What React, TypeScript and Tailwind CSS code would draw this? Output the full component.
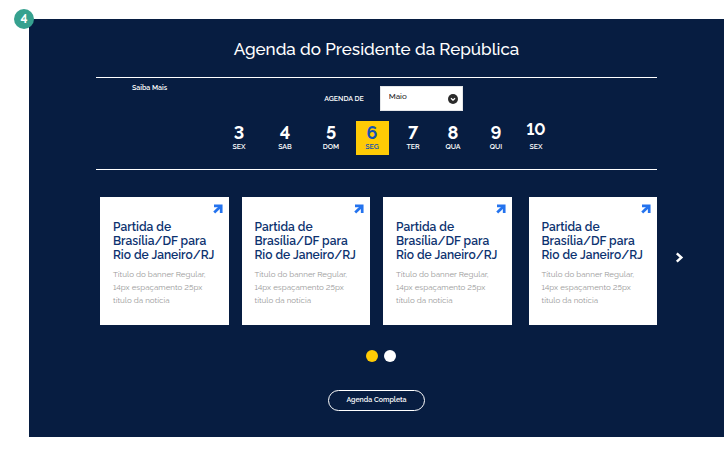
const days = [
  { number: "3", name: "SEX" },
  { number: "4", name: "SAB" },
  { number: "5", name: "DOM" },
  { number: "6", name: "SEG", active: true },
  { number: "7", name: "TER" },
  { number: "8", name: "QUA" },
  { number: "9", name: "QUI" },
  { number: "10", name: "SEX" },
];

const events = [1, 2, 3, 4].map((id) => ({
  id,
  title: ["Partida de", "Brasília/DF para", "Rio de Janeiro/RJ"],
  text: ["Título do banner Regular,", "14px espaçamento 25px", "título da notícia"],
}));

function ArrowIcon() {
  return (
    <svg className="h-[10px] w-[10px]" viewBox="0 0 10 10" fill="none" stroke="#2473ee" strokeWidth="2.7" aria-hidden="true">
      <path d="M1 1.8H8.2V9" />
      <path d="M7.8 2.2L1.2 8.5" />
    </svg>
  );
}

function MonthPicker() {
  return (
    <div className="flex items-center justify-center gap-4">
      <label htmlFor="month" className="text-[7px] leading-[8px] font-semibold">
        AGENDA DE
      </label>
      <div className="relative">
        <select
          id="month"
          defaultValue="Maio"
          className="block h-[25px] w-[83px] appearance-none border border-[#e4e6e8] bg-white pb-[5px] pl-2 text-[8px] font-medium text-[#222222]"
        >
          <option>Maio</option>
        </select>
        <svg className="pointer-events-none absolute top-2 right-[5px] h-[10px] w-[10px]" viewBox="0 0 10 10" aria-hidden="true">
          <circle cx="5" cy="5" r="5" fill="#2b2b2b" />
          <path d="M3 4.2L5 6.2L7 4.2" fill="none" stroke="white" strokeWidth="1.3" />
        </svg>
      </div>
    </div>
  );
}

function DayPicker() {
  return (
    <div className="mt-[10px] grid grid-cols-[46px_46px_41px_41px_40px_43px_40px_33px] justify-center pl-[22px]">
      {days.map((day) => (
        <button
          key={day.number}
          type="button"
          className={`flex h-[34px] w-[33px] flex-col items-center ${day.active ? "bg-[#ffcb05] text-[#1351b4]" : "text-white"}`}
        >
          <span className={`h-[21px] font-bold ${day.number === "10" ? "text-base leading-[17px]" : "text-lg leading-[23px]"}`}>
            {day.number}
          </span>
          <span className="text-[7px] leading-[9px] font-semibold">{day.name}</span>
        </button>
      ))}
    </div>
  );
}

function EventCard({ title, text }: { title: string[]; text: string[] }) {
  return (
    <article className="h-32 flex-1 bg-white pl-[13px] whitespace-nowrap last:ml-1">
      <a href="#evento" aria-label="Abrir evento" className="flex justify-end pt-[7px] pr-[6px]">
        <ArrowIcon />
      </a>
      <h2 className="mt-[6px] text-xs leading-[14px] font-semibold text-[#0c326f]">
        {title.map((line) => (
          <span key={line} className="block">{line}</span>
        ))}
      </h2>
      <p className="mt-[6px] text-[8px] leading-[13px] text-[#999999]">
        {text.map((line) => (
          <span key={line} className="block">{line}</span>
        ))}
      </p>
    </article>
  );
}

export default function App() {
  return (
    <main className="bg-white pt-[19px] pr-1 pb-6 pl-[29px] font-[Raleway,Lato,sans-serif] lining-nums">
      <section className="relative bg-[#071d41] pb-[26px] text-white">
        <span className="absolute -top-[10px] -left-[15px] flex h-5 w-5 items-center justify-center rounded-full bg-[#36a18f] text-xs font-bold">
          4
        </span>
        <header className="mx-[67px] pt-[18px]">
          <h1 className="text-center text-[17px] leading-6 font-medium">Agenda do Presidente da República</h1>
          <div className="mt-4 grid h-[93px] grid-cols-1 border-y border-white">
            <a href="#saiba-mais" className="col-start-1 row-start-1 mt-[6px] ml-9 justify-self-start text-[7px] leading-[8px] font-semibold">
              Saiba Mais
            </a>
            <div className="col-start-1 row-start-1 pt-2">
              <div className="pl-[34px]">
                <MonthPicker />
              </div>
              <DayPicker />
            </div>
          </div>
        </header>
        <div className="mt-[27px] flex items-center pl-[71px]">
          <div className="flex flex-1 gap-[13px]">
            {events.map((event) => (
              <EventCard key={event.id} title={event.title} text={event.text} />
            ))}
          </div>
          <button type="button" aria-label="Próximo" className="flex w-[67px] justify-center pr-[22px] pb-2">
            <svg className="h-[11px] w-[9px]" viewBox="0 0 9 11" fill="none" stroke="white" strokeWidth="2.4" aria-hidden="true">
              <path d="M1.8 1.3L6.4 5.5L1.8 9.7" />
            </svg>
          </button>
        </div>
        <div className="mt-[25px] flex justify-center gap-[6px] pl-2">
          <button type="button" aria-label="Página 1" className="h-3 w-3 rounded-full bg-[#ffcb05]" />
          <button type="button" aria-label="Página 2" className="h-3 w-3 rounded-full bg-white" />
        </div>
        <div className="mt-7 flex justify-center">
          <a href="#agenda" className="flex h-[21px] w-[97px] items-center justify-center rounded-full border border-white text-[7px] font-semibold">
            Agenda Completa
          </a>
        </div>
      </section>
    </main>
  );
}
